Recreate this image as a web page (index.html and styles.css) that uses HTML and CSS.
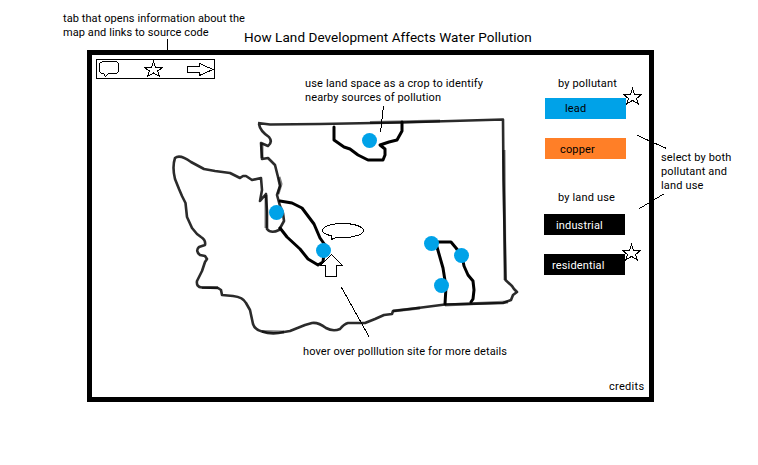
FILE: index.html
```html
<!DOCTYPE html>
<html lang="en">
<head>
<meta charset="utf-8">
<title>How Land Development Affects Water Pollution</title>
<link rel="stylesheet" href="styles.css">
</head>
<body>
<div class="page">
  <header class="header">
    <p class="tab-note">tab that opens information about the<br>map and links to source code</p>
    <h1 class="title">How Land Development Affects Water Pollution</h1>
  </header>
  <div class="body">
    <main class="frame">
      <div class="toolbar">
        <svg width="21" height="18" viewBox="0 0 21 18"><path d="M3.500 1.500H17.500L19.500 3.500V11.500L17.500 13.500H9.500L6.500 16.500L4.500 13.500H2.500L.5 11.500V3.500Z"/></svg>
        <svg width="21" height="18" viewBox="0 0 21 18"><path d="M10.500 1.500L12.500 7.500H19.500L14.500 11L16.500 16.500L10.500 13L4.500 16.500L6.500 11L1.500 7.500H8.500Z"/></svg>
        <svg width="27" height="18" viewBox="0 0 27 18"><path d="M.5 6.500H12.500V3.500L26 9.500L12.500 15.500V12.500H.5Z"/></svg>
      </div>
      <aside class="filters">
        <h2 class="group">by pollutant</h2>
        <button class="btn lead">lead</button>
        <button class="btn copper">copper</button>
        <h2 class="group land">by land use</h2>
        <button class="btn industrial">industrial</button>
        <button class="btn residential">residential</button>
        <a class="credits">credits</a>
      </aside>
    </main>
    <p class="side-note">select by both<br>pollutant and<br>land use</p>
  </div>
  <svg class="map" width="758" height="465" viewBox="0 0 758 465">
    <g class="coast">
      <path d="M258 123L270 124.500L320 124L400 122.500L503 119.500L503.500 180L505.500 280L512 286L514 289L517 292L513 295L511 300L503 303L445 304.500L410 309L393 311L392 314L384 315L375 319L365 323L348 323Q344 324 340 329Q333 332 326 328Q318 322 312 323L305 325L290 331L284 332Q272 335 262 331.500Q255 330 253 324L250 310L246 303Q243 297 233 296L222 295L221 290L218 288L202 287.500Q196 287 197 281L202 271L205 262L207 259L205 256L200 255Q195 251 199 247L205 245Q206 240 201 237L197 234L192 228L187 217L185.500 203L182 196L179 189L175 179Q172 167 175 158Q180 154 191 162L204 169L215 171L230 173L240 178L243 176L246 176L252 180L261 178L262 190L260 201L266 194L267 212L267 229Q271 234 279 230L284 221L283 213L280 206L277 195L280 186L278 177L275 165L268 158L262 159L261 143L268 146Q273 142 269 137Q260 131 259 124"/>
      <path class="faint" d="M262 143V158M279 177L281 184L278 194M266 195V228M370 122.500L440 121M504 150L505 280M393 311L420 308M445 305L508 302M202 287.500H218M262 331.500L284 332"/>
    </g>
    <g class="area">
      <path d="M334 127V140L344 147L350 149L358 155L368 160L383 160L385 155V149L380 145L389 142L397 140L402 131V122"/>
      <path d="M280 201L292 203L302 208L308 216L314 224L320 238L325 245L323 262L318 265L308 259L300 249L287 237L280 228"/>
      <path d="M431 242L451 242L456 248L462 256L464 266L468 275L473 281L474 290L473 299L471 302M437 247L443 268L446 287L445 304"/>
    </g>
    <g class="site">
      <circle cx="369.500" cy="140.500" r="7.500"/><circle cx="276.500" cy="212.500" r="7.500"/><circle cx="323.500" cy="250.500" r="7.500"/>
      <circle cx="431.500" cy="243.500" r="7.500"/><circle cx="461.500" cy="255.500" r="7.500"/><circle cx="441.500" cy="285.500" r="7.500"/>
    </g>
    <g class="ink">
      <path class="fill" d="M331.500 236C325 234 322.500 233 322.500 230.500C323 226 332 223.500 343 223.500C355 223.500 363.500 227 363.500 230.500C363.500 234 355 237.500 345 237.500H336L331.500 239.500Z"/>
      <path class="fill" d="M331.500 254.500L342.500 265.500H336.500V276.500H325.500V265.500H320.500Z"/>
      <path class="fill" d="M632.500 88.500L634.500 94.500H641.500L636.500 98.500L638.500 104L632.500 100.500L626.500 104L628.500 98.500L623.500 94.500H630.500Z"/>
      <path class="fill" d="M631.500 244.500L633.500 250.500H640.500L635.500 254.500L637.500 260L631.500 256.500L625.500 260L627.500 254.500L622.500 250.500H629.500Z"/>
      <path d="M167.500 39V55M383.500 106L380.500 132.500M341.500 287.500L369.500 337.500M637.500 135.500L666.500 148.500M639.500 208.500L664.500 193.500"/>
    </g>
    <g class="label">
      <text x="305" y="87" textLength="178">use land space as a crop to identify</text>
      <text x="305" y="101" textLength="136">nearby sources of pollution</text>
      <text x="303" y="355" textLength="204">hover over polllution site for more details</text>
    </g>
  </svg>
</div>
</body>
</html>
```
FILE: styles.css
```css
* { box-sizing: border-box; }
body { margin: 0; background: #fff; color: #000; font: 11px/14px Roboto, "Liberation Sans", sans-serif; letter-spacing: .15px; }
h1, h2, p { margin: 0; font-weight: 400; }
.page { position: relative; width: 758px; height: 465px; overflow: hidden; }
.header { display: flex; height: 50px; padding-left: 63px; }
.tab-note { width: 181px; padding-top: 12px; letter-spacing: .08px; white-space: nowrap; }
.title { padding-top: 29px; font-size: 13.500px; line-height: 16px; letter-spacing: .07px; white-space: nowrap; }
.body { display: flex; padding-left: 87px; }
.frame { display: flex; justify-content: space-between; align-items: flex-start; width: 567px; height: 352px; padding: 4px 5px 0 4px; border: 5px solid #000; }
.toolbar { display: flex; justify-content: space-between; width: 119px; height: 20px; padding: 0 0 0 2px; border: 1px solid #000; }
.toolbar svg, .ink { fill: none; stroke: #000; stroke-width: 1; shape-rendering: crispEdges; }
.filters { display: flex; flex-direction: column; width: 100px; padding-top: 18px; }
.group { margin-left: 14px; font-size: 11px; line-height: 14px; }
.group.land { margin-top: 32px; }
.btn { width: 81px; height: 21px; margin: 0; border: 0; border-radius: 0; padding: 0; font: inherit; letter-spacing: inherit; text-align: left; color: #000; }
.lead { margin: 7px 0 19px 1px; padding-left: 20px; background: #00a2e8; }
.copper { margin-left: 1px; padding: 2px 0 0 15px; background: #ff7f27; }
.industrial { margin: 9px 0 19px; padding: 2px 0 0 12px; background: #000; color: #fff; }
.residential { padding: 2px 0 0 8px; background: #000; color: #fff; }
.credits { margin: 105px 0 0 65px; letter-spacing: .3px; }
.side-note { padding: 101px 0 0 7px; white-space: nowrap; }
.map { position: absolute; left: 0; top: 0; pointer-events: none; }
.coast { fill: none; stroke: #2b2b2b; stroke-width: 2.600; stroke-linejoin: round; }
.coast .faint { stroke: #000; stroke-width: 3; opacity: .5; }
.area { fill: none; stroke: #000; stroke-width: 3; stroke-linejoin: round; stroke-linecap: round; }
.site { fill: #00a2e8; }
.fill { fill: #fff; }
.label { fill: #000; letter-spacing: 0; }
```
